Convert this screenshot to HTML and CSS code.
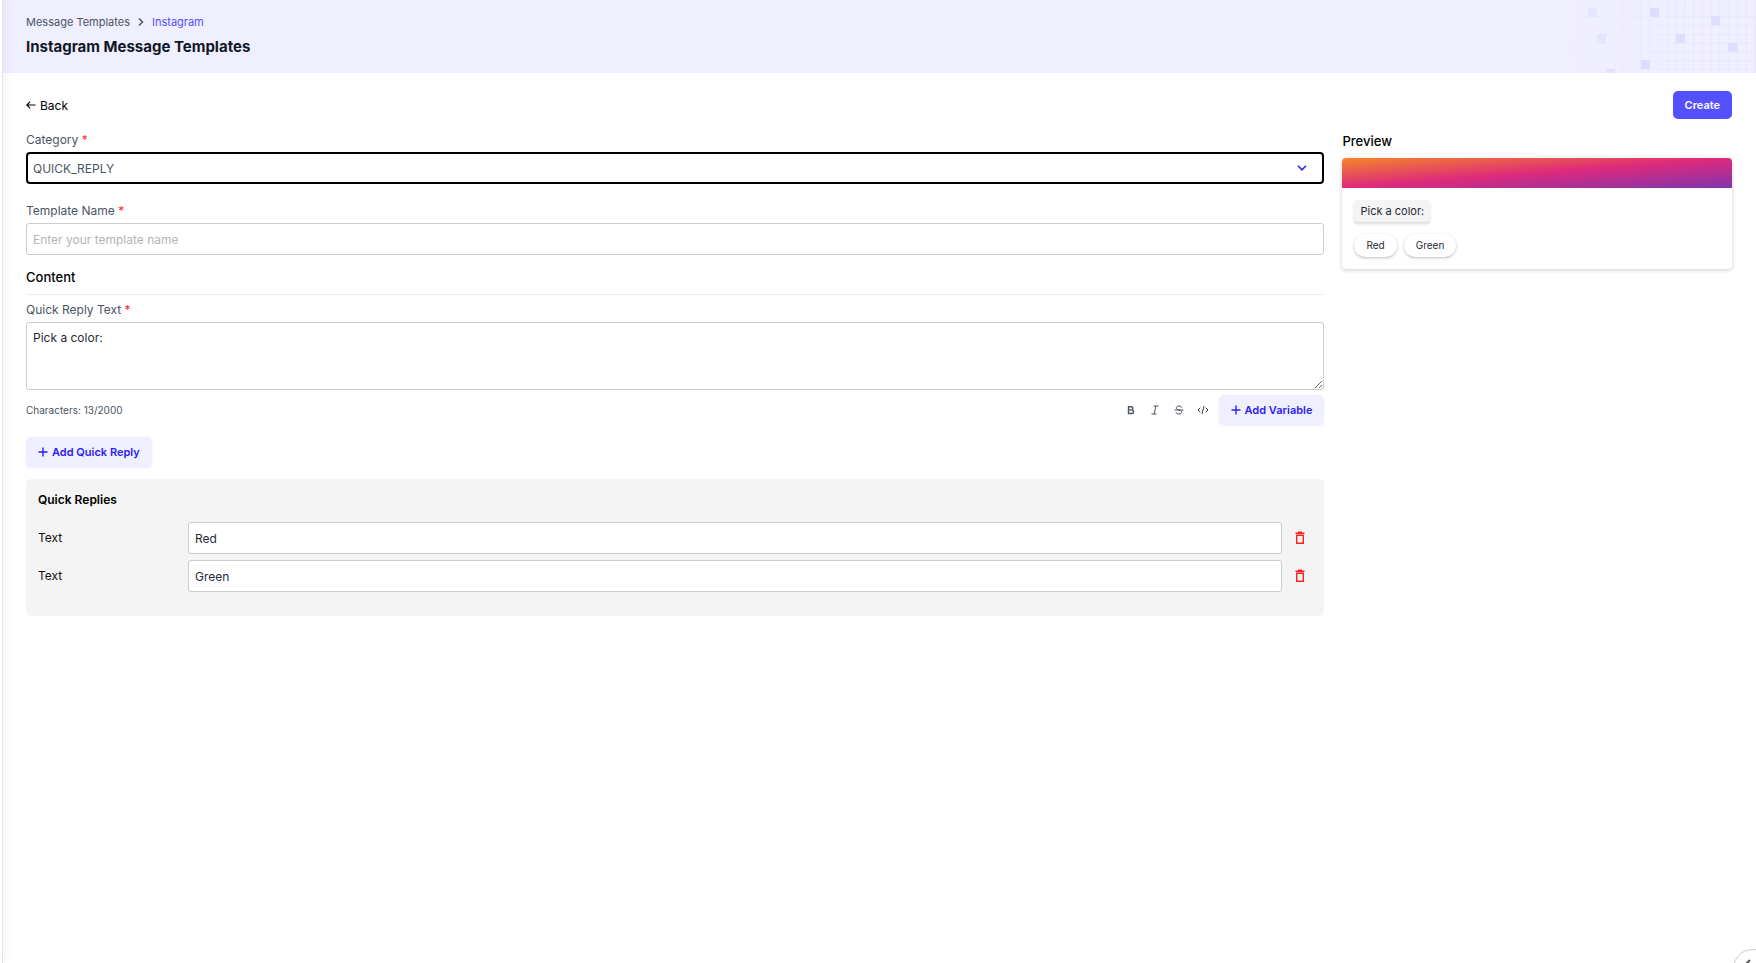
FILE: index.html
```
<!DOCTYPE html>
<html lang="en">
<head>
    <meta charset="UTF-8">
    <meta name="viewport" content="width=device-width, initial-scale=1.0">
    <title>Instagram Message Templates</title>
    <link rel="stylesheet" href="styles.css">
</head>
<body>
    <div class="page">
        <header class="page-header">
            <nav class="breadcrumb">
                <a href="#">Message Templates</a>
                <svg width="6" height="8" viewBox="0 0 6 8" fill="none" stroke="#4b5563" stroke-width="1.5"><path d="M1 0.5 4.5 4 1 7.5"/></svg>
                <a href="#" class="current">Instagram</a>
            </nav>
            <h1>Instagram Message Templates</h1>
            <svg class="header-pattern" width="196" height="73" viewBox="0 0 196 73">
                <defs>
                    <pattern id="grid" width="8.8" height="8.8" patternUnits="userSpaceOnUse" x="1" y="7.5">
                        <path d="M0.5 0V8.8M0 0.5H8.8" stroke="#e8e6fd" stroke-width="1" fill="none"/>
                    </pattern>
                    <linearGradient id="fade">
                        <stop offset="0" stop-color="#000"/>
                        <stop offset="0.7" stop-color="#fff"/>
                    </linearGradient>
                    <mask id="gridMask"><rect width="196" height="73" fill="url(#fade)"/></mask>
                </defs>
                <rect width="196" height="73" fill="url(#grid)" mask="url(#gridMask)"/>
                <g fill="#dfdcfd">
                    <rect x="28" y="8" width="9" height="9" opacity="0.5"/>
                    <rect x="37" y="34" width="9" height="9" opacity="0.6"/>
                    <rect x="46" y="69" width="9" height="9" opacity="0.7"/>
                    <rect x="81" y="60" width="9" height="9"/>
                    <rect x="90" y="8" width="9" height="9"/>
                    <rect x="116" y="34" width="9" height="9"/>
                    <rect x="151" y="16" width="9" height="9"/>
                    <rect x="168" y="43" width="9" height="9"/>
                </g>
            </svg>
        </header>

        <main>
            <div class="toolbar">
                <button type="button" class="back-btn">
                    <svg width="10" height="8" viewBox="0 0 10 8" fill="none" stroke="#000" stroke-width="1.2"><path d="M9.5 4H1M4.2 0.6 0.8 4l3.4 3.4"/></svg>
                    Back
                </button>
                <button type="button" class="create-btn">Create</button>
            </div>

            <div class="columns">
                <form class="template-form">
                    <div class="field">
                        <label for="category">Category <span class="required">*</span></label>
                        <div class="select-wrap">
                            <select id="category">
                                <option>QUICK_REPLY</option>
                            </select>
                            <svg width="10" height="6" viewBox="0 0 10 6" fill="none" stroke="#2a22f0" stroke-width="1.6"><path d="M1 0.8 5 4.8 9 0.8"/></svg>
                        </div>
                    </div>

                    <div class="field">
                        <label for="templateName">Template Name <span class="required">*</span></label>
                        <input type="text" id="templateName" placeholder="Enter your template name">
                    </div>

                    <h2 class="section-title">Content</h2>

                    <label for="replyText">Quick Reply Text <span class="required">*</span></label>
                    <textarea id="replyText">Pick a color:</textarea>

                    <div class="text-tools">
                        <span class="counter">Characters: 13/2000</span>
                        <div class="format-buttons">
                            <button type="button" class="icon-btn" aria-label="Bold">
                                <svg width="12" height="12" viewBox="0 0 12 12" fill="none" stroke="#4b5563" stroke-width="1.4"><path d="M3.5 2.7h2.8a1.6 1.6 0 0 1 0 3.2h-2.8zM3.5 5.9h3.2a1.8 1.8 0 0 1 0 3.6H3.5z"/></svg>
                            </button>
                            <button type="button" class="icon-btn" aria-label="Italic">
                                <svg width="12" height="12" viewBox="0 0 12 12" fill="none" stroke="#4b5563" stroke-width="1"><path d="M4.5 2h5M2.5 10h5M7 2 5 10"/></svg>
                            </button>
                            <button type="button" class="icon-btn" aria-label="Strikethrough">
                                <svg width="12" height="12" viewBox="0 0 12 12" fill="none" stroke="#4b5563" stroke-width="1"><path d="M1.5 6h9M8.8 3.8C8.6 2.6 7.6 2 6 2 4.3 2 3.3 2.8 3.3 3.9 3.3 5 4.4 5.6 6 6 7.8 6.4 8.8 7 8.8 8.2 8.8 9.3 7.7 10 6 10 4.3 10 3.2 9.3 3 8"/></svg>
                            </button>
                            <button type="button" class="icon-btn" aria-label="Code">
                                <svg width="12" height="12" viewBox="0 0 12 12" fill="none" stroke="#374151" stroke-width="1"><path d="M3.3 3.7 1 6l2.3 2.3M8.7 3.7 11 6 8.7 8.3M7 2 5 10"/></svg>
                            </button>
                        </div>
                        <button type="button" class="soft-btn">
                            <svg width="10" height="10" viewBox="0 0 10 10" stroke="#2a22f0" stroke-width="1.4"><path d="M5 0.5v9M0.5 5h9"/></svg>
                            Add Variable
                        </button>
                    </div>

                    <button type="button" class="soft-btn">
                        <svg width="10" height="10" viewBox="0 0 10 10" stroke="#2a22f0" stroke-width="1.4"><path d="M5 0.5v9M0.5 5h9"/></svg>
                        Add Quick Reply
                    </button>

                    <section class="replies">
                        <h3>Quick Replies</h3>
                        <div class="reply-row">
                            <label for="reply1">Text</label>
                            <input type="text" id="reply1" value="Red">
                            <button type="button" class="delete-btn" aria-label="Delete Red">
                                <svg width="12" height="14" viewBox="0 0 12 14" fill="none" stroke="#ff1f1f" stroke-width="1.4"><path d="M1.5 2.3h9M4 1.3h4M2.7 4.3h6.6v8H2.7z"/></svg>
                            </button>
                        </div>
                        <div class="reply-row">
                            <label for="reply2">Text</label>
                            <input type="text" id="reply2" value="Green">
                            <button type="button" class="delete-btn" aria-label="Delete Green">
                                <svg width="12" height="14" viewBox="0 0 12 14" fill="none" stroke="#ff1f1f" stroke-width="1.4"><path d="M1.5 2.3h9M4 1.3h4M2.7 4.3h6.6v8H2.7z"/></svg>
                            </button>
                        </div>
                    </section>
                </form>

                <aside class="preview">
                    <h2>Preview</h2>
                    <div class="preview-card">
                        <div class="preview-bar"></div>
                        <div class="preview-body">
                            <p class="bubble">Pick a color:</p>
                            <div class="chips">
                                <span class="chip">Red</span>
                                <span class="chip">Green</span>
                            </div>
                        </div>
                    </div>
                </aside>
            </div>
        </main>
    </div>

    <button type="button" class="float-btn" aria-label="Open panel">
        <svg width="20" height="20" viewBox="0 0 20 20" fill="none" stroke="#555" stroke-width="2"><path d="M7 1 1 7l6 6"/></svg>
    </button>
</body>
</html>
```

FILE: styles.css
```
* {
    box-sizing: border-box;
}

body {
    margin: 0;
    font-family: Inter, "Liberation Sans", sans-serif;
    font-size: 12px;
    line-height: 16px;
    color: #1f2937;
    background: #fff;
}

/* Edge of the collapsed sidebar */
body::before {
    content: "";
    position: fixed;
    top: 0;
    bottom: 0;
    left: 0;
    z-index: 1;
    width: 2px;
    border-right: 1px solid #e3e3ea;
    background: #fff;
    box-shadow: 0 0 10px rgba(0, 0, 0, 0.12);
}

button, input, select, textarea {
    font-family: inherit;
    font-size: 12px;
}

h1, h2, h3, p {
    margin: 0;
}

a {
    color: inherit;
    text-decoration: none;
}

.page {
    min-height: 100vh;
    margin-left: 2px;
}

/* Header */
.page-header {
    position: relative;
    height: 73px;
    padding: 14px 24px 0;
    background: #f0efff;
}

.breadcrumb {
    display: flex;
    align-items: center;
    gap: 8px;
    font-size: 11px;
    color: #4b5563;
}

.breadcrumb .current {
    color: #5550ff;
}

.page-header h1 {
    margin-top: 7px;
    font-size: 15px;
    line-height: 20px;
    font-weight: 700;
    color: #111827;
}

.header-pattern {
    position: absolute;
    top: 0;
    right: 0;
}

/* Content */
main {
    padding: 18px 24px 24px;
}

.toolbar {
    display: flex;
    justify-content: space-between;
    align-items: center;
}

.back-btn {
    display: flex;
    align-items: center;
    gap: 4px;
    padding: 0;
    border: none;
    background: none;
    color: #000;
}

.create-btn {
    height: 28px;
    padding: 0 12px;
    border: none;
    border-radius: 5px;
    background: #5550ff;
    color: #fff;
    font-size: 11px;
    font-weight: 600;
}

.columns {
    display: grid;
    grid-template-columns: 10fr 3fr;
    gap: 18px;
    margin-top: 13px;
}

.template-form label {
    display: block;
    margin-bottom: 4px;
    color: #4b5563;
}

.required {
    color: #ff1f1f;
}

.field {
    margin-bottom: 19px;
}

.field + .field {
    margin-bottom: 12px;
}

input, select, textarea {
    display: block;
    width: 100%;
    height: 32px;
    padding: 0 6px;
    border: 1px solid #cbcbd2;
    border-radius: 3px;
    background: #fff;
    color: #1f2937;
}

input::placeholder {
    color: #b5b5b5;
}

.select-wrap {
    position: relative;
}

.select-wrap select {
    appearance: none;
    padding: 0 5px;
    border: 2px solid #000;
    border-radius: 4px;
    color: #4b5563;
}

.select-wrap svg {
    position: absolute;
    top: 13px;
    right: 17px;
    pointer-events: none;
}

.section-title {
    margin-bottom: 7px;
    padding-bottom: 7px;
    border-bottom: 1px solid #ececef;
    font-size: 13px;
    line-height: 20px;
    font-weight: 500;
    color: #000;
}

textarea {
    height: 68px;
    padding: 7px 6px;
    line-height: 16px;
}

.text-tools {
    display: flex;
    align-items: center;
    margin: 5px 0 12px;
}

.counter {
    margin-right: auto;
    font-size: 10px;
    color: #4b5563;
}

.format-buttons {
    display: flex;
    margin-right: 4px;
}

.icon-btn {
    display: grid;
    place-items: center;
    width: 24px;
    height: 24px;
    padding: 0;
    border: none;
    background: none;
}

.soft-btn {
    display: flex;
    align-items: center;
    gap: 4px;
    height: 30px;
    padding: 0 12px;
    border: none;
    border-radius: 5px;
    background: #f0efff;
    box-shadow: 0 1px 2px rgba(85, 80, 255, 0.1);
    color: #2a22f0;
    font-size: 11px;
    font-weight: 600;
}

.replies {
    margin-top: 12px;
    padding: 13px 12px 24px;
    border-radius: 5px;
    background: #f4f4f4;
}

.replies h3 {
    margin-bottom: 6px;
    padding-bottom: 7px;
    border-bottom: 1px solid #efeff4;
    font-size: 12px;
    font-weight: 600;
    color: #000;
}

.reply-row {
    display: grid;
    grid-template-columns: 150px 1fr 30px;
    align-items: center;
}

.reply-row + .reply-row {
    margin-top: 6px;
}

.reply-row label {
    margin: 0;
    color: #111;
}

.delete-btn {
    display: grid;
    place-items: center;
    height: 24px;
    margin-left: 6px;
    padding: 0;
    border: none;
    background: none;
}

/* Preview */
.preview h2 {
    margin-bottom: 8px;
    font-size: 13px;
    line-height: 18px;
    font-weight: 500;
    color: #000;
}

.preview-card {
    border-radius: 4px;
    box-shadow: 0 1px 4px rgba(0, 0, 0, 0.2);
    overflow: hidden;
}

.preview-bar {
    height: 30px;
    background: linear-gradient(to bottom right, #f58529, #dd2a7b, #8134af);
}

.preview-body {
    padding: 12px;
}

.bubble {
    width: fit-content;
    padding: 3px 6px;
    border-radius: 4px;
    background: #f4f4f4;
    box-shadow: 0 2px 3px rgba(0, 0, 0, 0.15);
    font-size: 11px;
}

.chips {
    display: flex;
    gap: 7px;
    margin-top: 12px;
}

.chip {
    padding: 3px 12px 4px;
    border-radius: 12px;
    box-shadow: 0 1px 3px rgba(0, 0, 0, 0.25);
    font-size: 10px;
}

.float-btn {
    position: fixed;
    right: -16px;
    bottom: -25px;
    display: grid;
    place-items: center;
    width: 39px;
    height: 39px;
    padding: 0;
    border: 1px solid #ccc;
    border-radius: 50%;
    background: #fff;
}
```
